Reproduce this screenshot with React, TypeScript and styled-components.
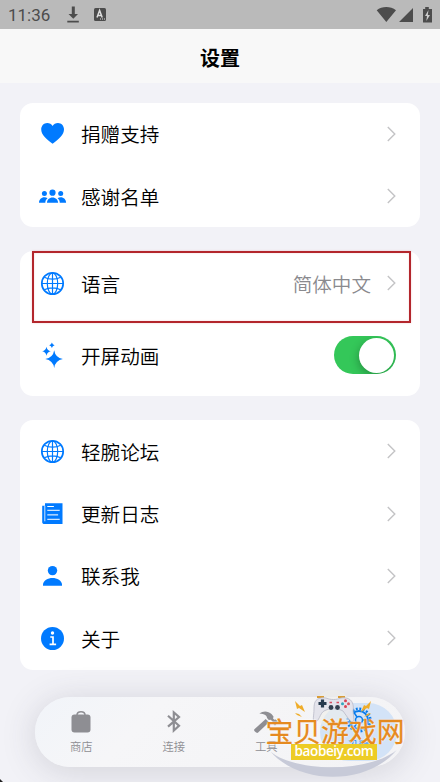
import React from 'react';
import styled, { createGlobalStyle } from 'styled-components';

const Global = createGlobalStyle`
  * { box-sizing: border-box; }
  body { margin: 0; background: #f2f2f7; font-family: "Noto Sans CJK SC", "Noto Sans", sans-serif; }
`;

const Screen = styled.div`
  position: relative;
  width: 440px;
  height: 782px;
  overflow: hidden;
  display: flex;
  flex-direction: column;
  background: #f2f2f7;
`;
const StatusBar = styled.header`
  height: 29px;
  flex: none;
  display: flex;
  align-items: center;
  padding: 1px 7px 0 8px;
  background: #bababa;
  color: #4c4c4c;
`;
const Clock = styled.span`
  font: 400 17px/28px Roboto, sans-serif;
  width: 59px;
`;
const StatusIcons = styled.div<{ $end?: boolean }>`
  display: flex;
  align-items: center;
  margin-left: ${(p) => (p.$end ? 'auto' : '0')};
`;
const TitleBar = styled.h1`
  height: 54px;
  flex: none;
  margin: 0;
  background: #f8f8f8;
  color: #000;
  font-size: 20px;
  font-weight: 700;
  line-height: 57px;
  text-align: center;
`;
const Content = styled.main`
  display: flex;
  flex-direction: column;
  gap: 24px;
  padding: 20px 20px 0;
`;
const Card = styled.section<{ $h: number }>`
  height: ${(p) => p.$h}px;
  background: #fff;
  border-radius: 13px;
`;
const Row = styled.div<{ $h?: number }>`
  display: flex;
  align-items: center;
  height: ${(p) => p.$h ?? 62.4}px;
  padding: 0 24px 0 19px;
`;
const RowIcon = styled.span`
  display: flex;
  width: 28px;
  height: 28px;
  margin: 1px 14px 0 0;
  color: #007aff;
`;
const Label = styled.span`
  flex: 1;
  color: #000;
  font-size: 19.6px;
  font-weight: 350;
  line-height: 28px;
  padding-top: 1px;
`;
const Value = styled.span`
  color: #8a8a8e;
  font-size: 19.6px;
  font-weight: 350;
  line-height: 28px;
  padding-top: 1px;
  margin-right: 16px;
`;
const Switch = styled.span`
  display: flex;
  justify-content: flex-end;
  width: 62px;
  height: 38px;
  padding: 1.6px;
  border-radius: 19px;
  background: #34c759;
  overflow: hidden;
`;
const Thumb = styled.span`
  width: 35px;
  height: 35px;
  border-radius: 50%;
  background: #fff;
  box-shadow: -1px 3px 8px rgba(0, 0, 0, 0.25);
`;
const Highlight = styled.div`
  position: absolute;
  left: 32px;
  top: 251px;
  width: 379px;
  height: 72px;
  border: 2px solid #b3262c;
  box-shadow: 0 0 2px rgba(190, 30, 40, 0.2), inset 0 0 2px rgba(190, 30, 40, 0.2);
`;
const TabBar = styled.nav`
  position: absolute;
  left: 35px;
  top: 697px;
  width: 370px;
  height: 70px;
  border-radius: 35px;
  display: grid;
  grid-template-columns: repeat(4, 1fr);
  padding: 6px 0;
  background: linear-gradient(135deg, #f1f4f9 0%, #f6f6f8 30%, #f3f3f5 100%);
  box-shadow: 0 4px 35px rgba(60, 60, 75, 0.18);
`;
const Tab = styled.div<{ $active?: boolean }>`
  display: flex;
  flex-direction: column;
  align-items: center;
  padding-top: ${(p) => (p.$active ? '5px' : '6px')};
  margin: ${(p) => (p.$active ? '0 8px 0 7px' : '0')};
  border-radius: 30px;
  background: ${(p) => (p.$active ? '#d3e3f7' : 'transparent')};
  color: ${(p) => (p.$active ? '#087bec' : '#8e8e93')};
`;
const TabLabel = styled.span`
  font-size: 11.3px;
  font-weight: 350;
  line-height: 16px;
  margin-top: 5px;
`;
const Watermark = styled.div`
  position: absolute;
  left: 258px;
  top: 687px;
  width: 156px;
  height: 92px;
`;
const MarkArt = styled.svg`
  position: absolute;
  inset: 0;
`;
const MarkName = styled.div`
  position: absolute;
  left: 7.5px;
  top: 22px;
  font-size: 27.8px;
  line-height: 42px;
  white-space: nowrap;
  color: #e58a20;
  -webkit-text-stroke: 0.3px #e58a20;
  text-shadow: 0 0 1px #fff, 0 0 1px #fff, 0 0 2px #fff;
`;
const MarkSite = styled.div`
  position: absolute;
  left: 33px;
  top: 57px;
  width: 86px;
  height: 16px;
  background: #edcc25;
  color: #fff;
  font: 600 13.6px/14px "Open Sans", sans-serif;
  letter-spacing: -0.45px;
  text-align: center;
  white-space: nowrap;
`;
const Corner = styled.svg`
  position: absolute;
  left: 0;
  bottom: 0;
`;

const Heart = () => (
  <svg width="28" height="28" viewBox="0 0 28 28" fill="currentColor">
    <path d="M13.6 23.700C7.200 19 2.200 15 2.200 9.300 2.200 5.700 4.900 2.900 8.200 2.900c2.300 0 4.400 1.200 5.400 3.200 1-2 3.100-3.200 5.400-3.200 3.400 0 6 2.800 6 6.400 0 5.700-5 9.700-11.400 14.400Z" />
  </svg>
);
const People = () => (
  <svg width="28" height="28" viewBox="0 0.500 28 28" fill="currentColor">
    <circle cx="13.500" cy="10.200" r="3.100" />
    <circle cx="5.400" cy="11" r="2.500" />
    <circle cx="21.700" cy="11" r="2.500" />
    <path d="M8 20.200c0-3 2.300-5.300 5.500-5.300s5.600 2.300 5.600 5.300ZM0 20.200c0-3.100 2.300-5.500 5.400-5.500 1.200 0 2.300.4 3.100 1-1.500 1.200-2.200 2.700-2.200 4.500ZM27.100 20.200c0-3.100-2.300-5.500-5.400-5.500-1.200 0-2.300.4-3.100 1 1.500 1.200 2.200 2.700 2.200 4.500Z" />
  </svg>
);
const Globe = () => (
  <svg width="28" height="28" viewBox="0 0 28 28" fill="none" stroke="currentColor" strokeWidth="1.200">
    <circle cx="13.500" cy="13.500" r="10.700" strokeWidth="1.700" />
    <ellipse cx="13.500" cy="13.500" rx="5.200" ry="10.500" />
    <path d="M13.500 3v21M3 13.500h21M5.400 7.200c4.400 2.600 11.800 2.600 16.200 0M5.400 19.800c4.400-2.600 11.800-2.600 16.200 0" />
  </svg>
);
const Sparkles = () => (
  <svg width="28" height="28" viewBox="0 0 28 28" fill="currentColor">
    <path d="M15.200 8.200Q16.300 15.700 23.900 17 16.300 18.300 15.200 26 14 18.300 6.300 17 14 15.700 15.200 8.200ZM7.500 4.800Q8.100 8.600 11.800 9.300 8.100 10 7.500 13.700 6.800 10 3.200 9.300 6.800 8.600 7.500 4.800ZM12.900.6Q13.400 2.800 15.600 3.300 13.400 3.800 12.900 5.900 12.400 3.800 10.200 3.300 12.400 2.800 12.900.6Z" />
  </svg>
);
const News = () => (
  <svg width="28" height="28" viewBox="0 -0.800 28 28">
    <path d="M6 2.500h17.500v20.800H5.500c-1.400 0-2.300-.9-2.300-2.200V5h2.800Z" fill="currentColor" />
    <path d="M5.800 5v15.500" stroke="#fff" strokeWidth=".8" />
    <path d="M8.300 5.700h6.600M8.300 9.500h12.400M8.300 18.500h12.400" stroke="#fff" strokeWidth="1" />
    <path d="M8.300 14h10.800" stroke="#a5d0ff" strokeWidth="1.700" />
  </svg>
);
const Person = () => (
  <svg width="28" height="28" viewBox="0 -0.800 28 28" fill="currentColor">
    <circle cx="13.500" cy="7.800" r="4.700" />
    <path d="M4 23v-1.300c0-4 5-6.600 9.500-6.600s9.500 2.600 9.500 6.600V23Z" />
  </svg>
);
const Info = () => (
  <svg width="28" height="28" viewBox="0 0 28 28">
    <circle cx="13.500" cy="13.500" r="11.500" fill="currentColor" />
    <circle cx="13.500" cy="8" r="1.700" fill="#fff" />
    <path d="M11.300 12h2.700v7M10.600 19.300h6.500" fill="none" stroke="#fff" strokeWidth="1.700" />
  </svg>
);
const Chevron = () => (
  <svg width="9" height="16" viewBox="0 0 9 16" fill="none" stroke="#c4c4c6" strokeWidth="1.400">
    <path d="m.8 1 7 7-7 7" />
  </svg>
);
const Gear = () => (
  <svg width="28" height="24" viewBox="0 0 28 24" overflow="visible" fill="none" stroke="currentColor">
    <circle cx="15" cy="12" r="11.300" strokeWidth="2.500" strokeDasharray="1.900 1.650" />
    <circle cx="15" cy="12" r="9" strokeWidth="2" />
    <circle cx="15" cy="12" r="3.500" strokeWidth="1.500" />
    <path d="m13 9-4-6M18.500 12H24M13 15l-4 6" strokeWidth="1.500" />
  </svg>
);
const Bag = () => (
  <svg width="28" height="24" viewBox="0 0 28 24">
    <rect x="4.500" y="5.500" width="19" height="18" rx="3" fill="currentColor" />
    <path d="M10 7V6c0-4.500 8-4.500 8 0v1" fill="none" stroke="currentColor" strokeWidth="1.500" />
  </svg>
);
const Bluetooth = () => (
  <svg width="28" height="24" viewBox="0 0 28 24" fill="none" stroke="currentColor" strokeWidth="2.200">
    <path d="m8 6.700 11 10-5.200 4.800v-18L19 8 8 17.700" />
  </svg>
);
const Hammer = () => (
  <svg width="28" height="24" viewBox="0 0 28 24" fill="currentColor">
    <path d="M7.300 4.500c4-3 8.700-2.700 12.200.4l2 2.700-.4 2.100 1.300 1.100 1.400-.4 2.500 2.500-3.300 3.500-2.600-2.500.2-1.500-1.900-1.700-1.900.2-1.800-1.900c.3-2.300-2.400-4.100-7.700-4.500Z" />
    <path d="m13.700 10 3.300 3.200L6.100 23.600c-1.400 1.200-5.100-1.700-3.700-3.300Z" />
  </svg>
);

const NavRow = ({ icon, text, value, h }: { icon: React.ReactNode; text: string; value?: string; h?: number }) => (
  <Row $h={h}>
    <RowIcon>{icon}</RowIcon>
    <Label>{text}</Label>
    {value && <Value>{value}</Value>}
    <Chevron />
  </Row>
);

export default function App() {
  return (
    <Screen>
      <Global />
      <StatusBar>
        <Clock>11:36</Clock>
        <StatusIcons>
          <svg width="42" height="20" viewBox="0 0 42 20" fill="#4c4c4c">
            <path d="M4.800 1.500h3V9H11l-4.700 4.800L1.500 9h3.300ZM.3 15.700h11.500v1.700H.3Z" />
            <rect x="27" y="3" width="12" height="13" rx="1.500" />
            <path d="m30 12.500 2.600-7 2.600 7M31 10.500h3.200" fill="none" stroke="#ddd" strokeWidth="1.500" />
            <path d="M33 14h5" stroke="#ddd" strokeDasharray="1 1" />
          </svg>
        </StatusIcons>
        <StatusIcons $end>
          <svg width="57" height="20" viewBox="0 0 57 20" fill="#4c4c4c">
            <path d="M.7 5.300C6 .9 14.500.9 20 5.300L10.300 17ZM23 17 37 3v14ZM47 4h2.200V2h3.600v2H56v13.500h-9Z" />
            <path d="m52.500 5-3.500 6h2l-.7 5 3.700-6h-2.200Z" fill="#ccc" />
          </svg>
        </StatusIcons>
      </StatusBar>
      <TitleBar>设置</TitleBar>
      <Content>
        <Card $h={124}>
          <NavRow icon={<Heart />} text="捐赠支持" h={61.8} />
          <NavRow icon={<People />} text="感谢名单" h={62.7} />
        </Card>
        <Card $h={145}>
          <NavRow icon={<Globe />} text="语言" value="简体中文" h={64} />
          <Row $h={80}>
            <RowIcon><Sparkles /></RowIcon>
            <Label>开屏动画</Label>
            <Switch><Thumb /></Switch>
          </Row>
        </Card>
        <Card $h={250}>
          <NavRow icon={<Globe />} text="轻腕论坛" />
          <NavRow icon={<News />} text="更新日志" />
          <NavRow icon={<Person />} text="联系我" />
          <NavRow icon={<Info />} text="关于" />
        </Card>
      </Content>
      <Highlight />
      <TabBar>
        <Tab><Bag /><TabLabel>商店</TabLabel></Tab>
        <Tab><Bluetooth /><TabLabel>连接</TabLabel></Tab>
        <Tab><Hammer /><TabLabel>工具</TabLabel></Tab>
        <Tab $active><Gear /><TabLabel>设置</TabLabel></Tab>
      </TabBar>
      <Watermark>
        <MarkArt width="156" height="92" viewBox="0 0 156 92">
          <circle cx="75" cy="22" r="19" fill="#eeeee9" opacity=".6" />
          <path d="M12.700 64.700c24 20 97 22 126-1.700-30 36-97 35-126 1.700Z" fill="#c7cad8" />
          <path d="M59 10h7M80 10h7" stroke="#d99c35" strokeWidth="2" />
          <path d="M63 11c6-1 6 1.500 12.500 1.500S82 10 88 11c7 1 8 8 7 13l1 9c-2 3-4 1-6-2l-5-7c-5-3-14-3-19 0-4 2-5 11-9 11-3-1-1-6-1-13 0-6 1-10 7-11Z" fill="#e4e4ec" stroke="#b9bac8" strokeWidth=".8" />
          <path d="M64.500 12.500v8M60.500 16.500h8" stroke="#263a4d" strokeWidth="3.200" />
          <g fill="#34404f"><circle cx="73" cy="20.500" r="2.400" /><circle cx="79.500" cy="20.500" r="2.400" /></g>
          <path d="M71.500 15.500H74M78.500 15.500H81" stroke="#d94e60" strokeWidth="1.500" />
          <circle cx="87.500" cy="13.800" r="1.500" fill="#da4354" /><circle cx="87.500" cy="19.600" r="1.500" fill="#da4354" />
          <circle cx="84.500" cy="16.700" r="1.500" fill="#32a6bc" /><circle cx="90.500" cy="16.700" r="1.500" fill="#d95461" />
          <path d="m37 14 5 5 2-1 3 7-6-4-2 1Zm0 12 4 1 3 3-5-2ZM113 14l-5 5-2-1-3 7 6-4 2 1Zm0 12-4 1-3 3 5-2Z" fill="#efad2a" />
        </MarkArt>
        <MarkName>宝贝游戏网</MarkName>
        <MarkSite>baobeiy.com</MarkSite>
      </Watermark>
      <Corner width="3" height="3"><path d="M0 0v3h3Z" fill="#222" /></Corner>
    </Screen>
  );
}
